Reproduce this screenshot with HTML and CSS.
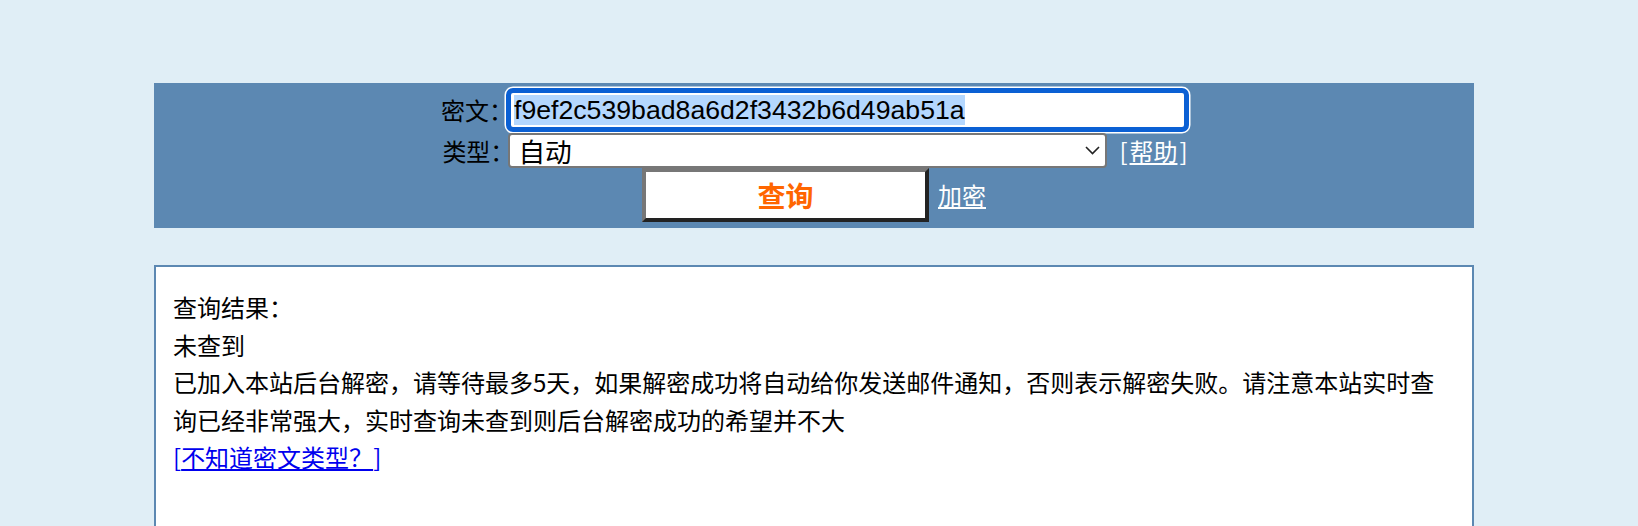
FILE: index.html
```html
<!DOCTYPE html>
<html lang="zh-CN">
<head>
<meta charset="utf-8">
<title>MD5 解密</title>
<link rel="stylesheet" href="styles.css">
</head>
<body>
<div class="page">
  <form class="panel">
    <div class="row row-cipher">
      <label class="lbl">密文：</label>
      <div class="cipher"><span class="sel">f9ef2c539bad8a6d2f3432b6d49ab51a</span></div>
    </div>
    <div class="row row-type">
      <label class="lbl">类型：</label>
      <div class="select-wrap">
        <select class="type"><option>自动</option></select>
        <svg class="chev" width="15" height="9" viewBox="0 0 15 9"><path d="M1 1 L7.5 7.5 L14 1" fill="none" stroke="#222" stroke-width="1.6"/></svg>
      </div>
      <span class="help">[<a href="#">帮助</a>]</span>
    </div>
    <div class="row row-go">
      <button type="button" class="go">查询</button>
      <a class="enc" href="#">加密</a>
    </div>
  </form>
  <div class="result">
    <p>查询结果：<br>未查到<br>已加入本站后台解密，请等待最多5天，如果解密成功将自动给你发送邮件通知，否则表示解密失败。请注意本站实时查询已经非常强大，实时查询未查到则后台解密成功的希望并不大<br><span class="tip">[<a href="#">不知道密文类型？</a>]</span></p>
  </div>
</div>
</body>
</html>
```
FILE: styles.css
```css
html, body {
  margin: 0;
  background: #e0eef6;
}
body {
  font-family: "Noto Sans CJK SC", "Liberation Sans", sans-serif;
  font-size: 24px;
  color: #000;
}
.page {
  width: 1320px;
  margin-left: 154px;
  padding-top: 83px;
}
.panel {
  background: #5c88b2;
  padding: 4px 0 6px;
  display: flex;
  flex-direction: column;
}
.row {
  display: flex;
  justify-content: center;
  align-items: center;
}
.row-cipher {
  padding-left: 3px;
}
.row-type {
  padding-left: 2px;
}
.lbl {
  width: 64px;
  white-space: nowrap;
  line-height: 1;
}
.cipher {
  width: 683px;
  height: 44px;
  box-sizing: border-box;
  margin: 1px;
  border: 5px solid #0b60d4;
  border-radius: 7px;
  box-shadow: 0 0 0 1.5px #fff;
  background: #fff;
  padding-left: 3px;
  display: flex;
  align-items: center;
  font-family: "Liberation Sans", Arial, sans-serif;
  font-size: 26.67px;
  white-space: nowrap;
}
.sel {
  background: #b4d7fe;
  line-height: 30px;
}
.select-wrap {
  position: relative;
  margin-left: 2px;
  display: flex;
}
.type {
  -webkit-appearance: none;
  appearance: none;
  width: 599px;
  height: 35px;
  box-sizing: border-box;
  margin: 0;
  border: 2px solid #777;
  border-radius: 4px;
  background: #fff;
  color: #000;
  font-family: "Noto Sans CJK SC", sans-serif;
  font-size: 26.67px;
  padding: 0 0 0 8px;
  line-height: 31px;
}
.chev {
  position: absolute;
  right: 7px;
  top: 13px;
}
.help {
  margin-left: 12px;
  color: #fff;
  line-height: 1;
}
.help a {
  color: #fff;
  margin: 0 2px;
}
.go {
  width: 287px;
  height: 54px;
  box-sizing: border-box;
  margin: 0;
  border-width: 4px;
  border-style: solid;
  border-color: #777 #222 #222 #777;
  background: #fff;
  color: #ff6600;
  font-family: "Noto Sans CJK SC", sans-serif;
  font-weight: bold;
  font-size: 28px;
  padding: 0;
  line-height: 1;
  text-align: center;
}
.enc {
  margin-left: 9px;
  color: #fff;
  line-height: 1;
}
.result {
  margin-top: 37px;
  border: 2px solid #5c88b2;
  background: #fff;
  padding: 21px 17px;
  min-height: 320px;
  line-height: 37.5px;
}
.result p {
  margin: 0;
}
.tip,
.tip a {
  color: #0000ee;
}
```
